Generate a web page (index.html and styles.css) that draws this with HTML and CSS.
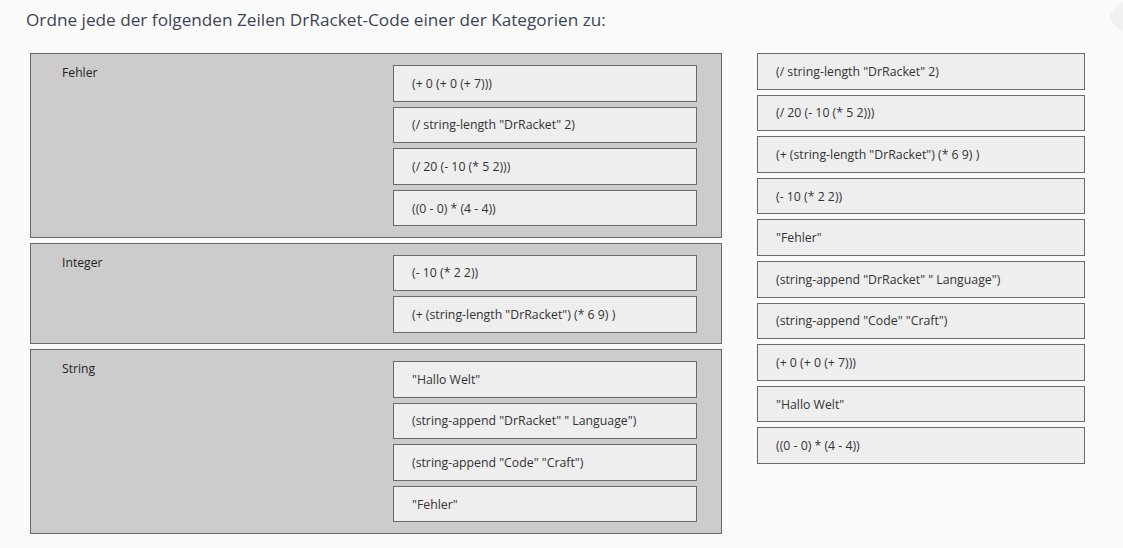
FILE: index.html
```html
<!DOCTYPE html>
<html lang="de">
<head>
<meta charset="utf-8">
<title>DrRacket Zuordnung</title>
<link rel="stylesheet" href="styles.css">
</head>
<body>
<div class="corner-btn"></div>
<h1 class="title">Ordne jede der folgenden Zeilen DrRacket-Code einer der Kategorien zu:</h1>
<div class="task">
  <div class="categories">
    <div class="category">
      <div class="cat-label">Fehler</div>
      <div class="cat-items">
        <div class="item">(+ 0 (+ 0 (+ 7)))</div>
        <div class="item">(/ string-length "DrRacket" 2)</div>
        <div class="item">(/ 20 (- 10 (* 5 2)))</div>
        <div class="item">((0 - 0) * (4 - 4))</div>
      </div>
    </div>
    <div class="category">
      <div class="cat-label">Integer</div>
      <div class="cat-items">
        <div class="item">(- 10 (* 2 2))</div>
        <div class="item">(+ (string-length "DrRacket") (* 6 9) )</div>
      </div>
    </div>
    <div class="category">
      <div class="cat-label">String</div>
      <div class="cat-items">
        <div class="item">"Hallo Welt"</div>
        <div class="item">(string-append "DrRacket" " Language")</div>
        <div class="item">(string-append "Code" "Craft")</div>
        <div class="item">"Fehler"</div>
      </div>
    </div>
  </div>
  <div class="pool">
    <div class="item">(/ string-length "DrRacket" 2)</div>
    <div class="item">(/ 20 (- 10 (* 5 2)))</div>
    <div class="item">(+ (string-length "DrRacket") (* 6 9) )</div>
    <div class="item">(- 10 (* 2 2))</div>
    <div class="item">"Fehler"</div>
    <div class="item">(string-append "DrRacket" " Language")</div>
    <div class="item">(string-append "Code" "Craft")</div>
    <div class="item">(+ 0 (+ 0 (+ 7)))</div>
    <div class="item">"Hallo Welt"</div>
    <div class="item">((0 - 0) * (4 - 4))</div>
  </div>
</div>
</body>
</html>
```
FILE: styles.css
```css
html, body {
  margin: 0;
  padding: 0;
  background: #fafafa;
  font-family: "Open Sans", "Noto Sans", sans-serif;
  color: #333;
}
body {
  position: relative;
  height: 548px;
  overflow: hidden;
}
.corner-btn {
  position: absolute;
  left: 1112px;
  top: 4px;
  width: 26px;
  height: 26px;
  background: #f1f1f1;
  border-radius: 8px;
  transform: rotate(45deg);
}
.title {
  margin: 0;
  padding: 8px 0 0 26px;
  height: 53px;
  box-sizing: border-box;
  font-size: 17.2px;
  font-weight: 400;
  line-height: 24px;
  color: #3b4556;
}
.task {
  display: flex;
  align-items: flex-start;
  padding-left: 30px;
  gap: 35px;
}
.categories {
  width: 692px;
  display: flex;
  flex-direction: column;
  gap: 5px;
}
.category {
  display: flex;
  justify-content: space-between;
  background: #cccccc;
  border: 1px solid #6a6a6a;
  padding: 11px 24px 10.2px 31px;
}
.cat-label {
  font-size: 12.2px;
  line-height: 16px;
  color: #222;
}
.cat-items {
  width: 304px;
  display: flex;
  flex-direction: column;
  gap: 5px;
}
.pool {
  width: 328px;
  display: flex;
  flex-direction: column;
  gap: 5px;
}
.item {
  box-sizing: border-box;
  height: 36.6px;
  display: flex;
  align-items: center;
  padding-left: 18px;
  background: #eeeeee;
  border: 1px solid #6a6a6a;
  font-size: 12.3px;
  color: #333;
  white-space: nowrap;
}
```
